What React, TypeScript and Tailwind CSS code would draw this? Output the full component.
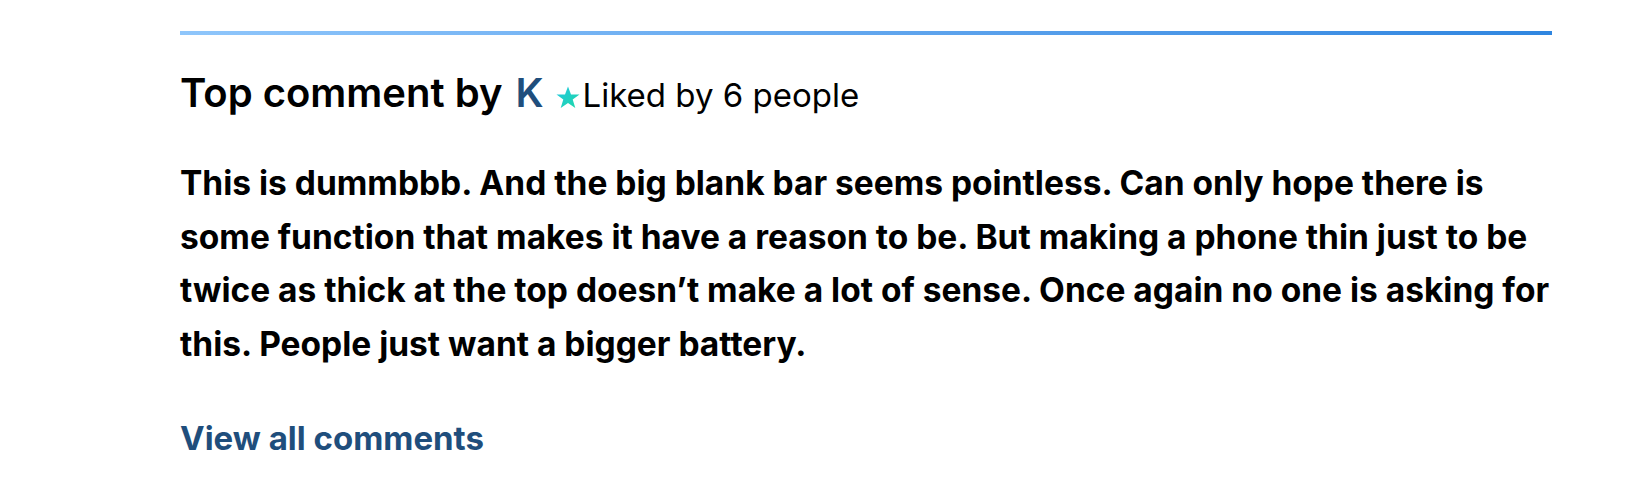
import React from "react";

export default function App() {
  return (
    <div className="w-[1630px] h-[492px] bg-white text-black" style={{ fontFamily: "Inter, 'Noto Sans', sans-serif" }}>
      <div className="ml-[180px] w-[1372px] pt-[31px]">
        <div className="h-[4px] w-full bg-gradient-to-r from-[#8fc6fb] to-[#2f86e0]" />
        <div className="mt-[34px] flex items-baseline whitespace-nowrap">
          <span className="text-[40px] font-semibold leading-[48px]">Top comment by</span>
          <span className="ml-[13px] text-[40px] font-semibold leading-[48px] text-[#1f4e7c]">K</span>
          <svg className="ml-[12px] mr-[3px] self-center mt-[6px]" width="24" height="23" viewBox="0 0 24 23">
            <defs>
              <linearGradient id="sg" x1="0" y1="0" x2="1" y2="1">
                <stop offset="0" stopColor="#22c7e3" />
                <stop offset="1" stopColor="#1fd8a6" />
              </linearGradient>
            </defs>
            <path d="M12 0.5l3 8h8.5l-6.8 5.1 2.6 8.4L12 17l-7.3 5 2.6-8.4L0.5 8.5H9z" fill="url(#sg)" />
          </svg>
          <span className="text-[33px] font-normal leading-[48px]">Liked by 6 people</span>
        </div>
        <p className="mt-[38px] w-[1420px] text-[33.5px] font-bold leading-[53.6px]">
          This is dummbbb. And the big blank bar seems pointless. Can only hope there is
          <br />
          some function that makes it have a reason to be. But making a phone thin just to be
          <br />
          twice as thick at the top doesn’t make a lot of sense. Once again no one is asking for
          <br />
          this. People just want a bigger battery.
        </p>
        <a className="mt-[47px] block w-fit text-[33px] font-bold leading-[40px] text-[#1f4e7c]">View all comments</a>
      </div>
    </div>
  );
}
